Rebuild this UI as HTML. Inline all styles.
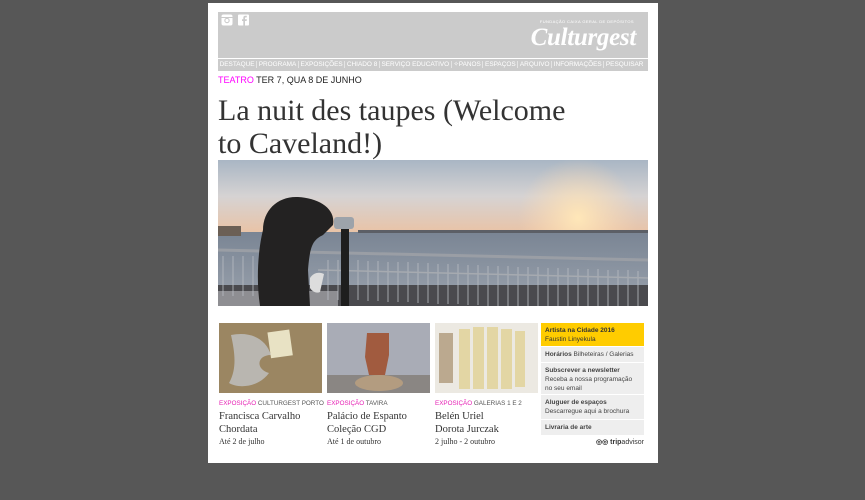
<!DOCTYPE html>
<html><head><meta charset="utf-8"><style>
*{margin:0;padding:0;box-sizing:border-box}
body{width:865px;height:500px;background:#575757;font-family:"Liberation Sans",sans-serif;position:relative;overflow:hidden}
#page{position:absolute;left:208px;top:3px;width:450px;height:460px;background:#fff}
#hdr{position:absolute;left:10px;top:9px;width:430px;height:46px;background:#cbcbcb}
#nav{position:absolute;left:10px;top:56px;width:430px;height:12px;background:#cbcbcb;font-size:6.45px;color:#fff;white-space:nowrap;line-height:12px;overflow:hidden}
#nav span{padding:0 1.6px;border-right:1px solid #e4e4e4}
.abs{position:absolute}
.ser{font-family:"Liberation Serif",serif;color:#333}
.th{position:absolute;top:320px;width:103px;height:70px}
.cap{position:absolute;top:397px;width:105px}
.cap .k{font-size:6.3px;color:#555;white-space:nowrap}
.cap .k b{color:#e61fb4;font-weight:normal}
.cap .t{font-family:"Liberation Serif",serif;font-size:10.5px;color:#333;line-height:13px;margin-top:3px}
.cap .d{font-family:"Liberation Serif",serif;font-size:8px;color:#333;margin-top:1px}
#side{position:absolute;left:333px;top:320px;width:103px;font-size:6.5px;color:#444}
#side div{background:#eee;border-bottom:1px solid #fff;padding:3px 4px;line-height:9px}
</style></head><body>
<div id="page">
<div id="hdr">
 <svg class="abs" style="left:3px;top:2px" width="30" height="12" viewBox="0 0 30 12">
  <rect x="0.5" y="0.5" width="11" height="11" rx="2" fill="#fff"/>
  <circle cx="6" cy="6.5" r="2.7" fill="#cbcbcb"/><circle cx="6" cy="6.5" r="1.6" fill="#fff"/>
  <rect x="0.5" y="3" width="11" height="1" fill="#cbcbcb"/>
  <rect x="17" y="0.5" width="11" height="11" rx="1" fill="#fff"/>
  <path d="M24 12V7h1.6l.3-1.8H24V4.2c0-.5.2-.8.8-.8h1V1.8h-1.5C22.9 1.8 22.3 2.7 22.3 4v1.2H21V7h1.3v5z" fill="#cbcbcb"/>
 </svg>
 <div class="abs" style="right:14px;top:7px;font-size:4px;color:#fff;letter-spacing:.4px;white-space:nowrap">FUNDAÇÃO CAIXA GERAL DE DEPÓSITOS</div>
 <div class="abs" style="right:12px;top:12px;font-family:'Liberation Serif',serif;font-style:italic;font-weight:bold;font-size:25px;color:#fff;letter-spacing:-.3px">Culturgest</div>
</div>
<div id="nav"><span>DESTAQUE</span><span>PROGRAMA</span><span>EXPOSIÇÕES</span><span>CHIADO 8</span><span>SERVIÇO EDUCATIVO</span><span>✧PANOS</span><span>ESPAÇOS</span><span>ARQUIVO</span><span>INFORMAÇÕES</span><span style="border:0">PESQUISAR</span></div>
<div class="abs" style="left:10px;top:72px;font-size:9px;color:#222;white-space:nowrap"><span style="color:#f0f">TEATRO</span> TER 7, QUA 8 DE JUNHO</div>
<div class="abs ser" style="left:10px;top:91px;width:362px;font-size:30px;line-height:33px">La nuit des taupes (Welcome to Caveland!)</div>
<svg class="abs" style="left:10px;top:157px" width="430" height="146" viewBox="0 0 430 146">
 <defs>
  <linearGradient id="sky" x1="0" y1="0" x2="0" y2="1"><stop offset="0" stop-color="#a9b6c4"/><stop offset=".5" stop-color="#d6d3d3"/><stop offset="1" stop-color="#e9c3a6"/></linearGradient>
  <linearGradient id="sea" x1="0" y1="0" x2="0" y2="1"><stop offset="0" stop-color="#7a8594"/><stop offset="1" stop-color="#9aa2ad"/></linearGradient>
  <radialGradient id="sun" cx="360" cy="58" r="60" gradientUnits="userSpaceOnUse"><stop offset="0" stop-color="#ffe7b8"/><stop offset="1" stop-color="#ffd9b0" stop-opacity="0"/></radialGradient>
 </defs>
 <rect width="430" height="73" fill="url(#sky)"/>
 <rect width="430" height="73" fill="url(#sun)"/>
 <rect y="72" width="430" height="74" fill="url(#sea)"/>
 <rect x="0" y="66" width="23" height="10" fill="#6b5f55"/>
 <rect x="140" y="70" width="290" height="3" fill="#5c5f66"/>
 <rect y="125" width="430" height="21" fill="#4a4a4e"/>
 <rect y="131" width="120" height="15" fill="#8e8e92"/>
 <path d="M0 90L430 100" stroke="#9a9ea5" stroke-width="3"/>
 <g stroke="#b8bcc2" stroke-width=".8">
  <path d="M5 96v40M15 96v40M25 96v40M35 96v40M45 96v40M110 100v40M120 100v40M130 100v40M140 100v40M150 101v40M160 101v40M170 102v40M180 102v40M190 102v40M200 103v40M210 103v40M220 104v40M230 104v40M240 104v40M250 105v40M260 105v40M270 106v40M280 106v40M290 106v40M300 107v40M310 107v40M320 107v40M330 108v40M340 108v40M350 108v40M360 109v40M370 109v40M380 109v40M390 110v40M400 110v40M410 110v40M420 111v40"/>
 </g>
 <path d="M100 110L430 118" stroke="#a6aab0" stroke-width="1.5"/>
 <rect x="123" y="65" width="8" height="81" fill="#1e1e1e"/>
 <rect x="116" y="57" width="20" height="12" rx="3" fill="#9da3aa"/>
 <path d="M42 146C38 120 40 90 45 70C45 50 60 36 80 37C100 38 118 48 115 65L105 75C95 80 92 85 90 110L92 146Z" fill="#232222"/>
 <path d="M92 118c4-6 10-6 14-4l-4 18c-4 2-8-1-10-4z" fill="#ddd"/>
</svg>
<svg class="th" style="left:11px" viewBox="0 0 103 70"><rect width="103" height="70" fill="#9b8662"/><path d="M12 12c20-4 35 4 40 20c-14 0-16 14-2 18c-10 14-30 16-40 10c8-14 6-30 2-48z" fill="#b9b6b0"/><rect x="50" y="8" width="22" height="26" fill="#e8e2c4" transform="rotate(-8 60 20)"/></svg>
<svg class="th" style="left:119px" viewBox="0 0 103 70"><rect width="103" height="70" fill="#a9acb6"/><rect y="52" width="103" height="18" fill="#8a8683"/><ellipse cx="52" cy="60" rx="24" ry="8" fill="#b39c80"/><path d="M40 10h22v22l-4 20h-16l-4-18z" fill="#a15b3f"/></svg>
<svg class="th" style="left:227px" viewBox="0 0 103 70"><rect width="103" height="70" fill="#ece9e2"/><g fill="#e3d6a4"><rect x="24" y="6" width="11" height="60"/><rect x="38" y="4" width="11" height="62"/><rect x="52" y="4" width="11" height="62"/><rect x="66" y="6" width="11" height="60"/><rect x="80" y="8" width="10" height="56"/></g><rect x="4" y="10" width="14" height="50" fill="#bba98f"/></svg>
<div class="cap" style="left:11px"><div class="k"><b>EXPOSIÇÃO</b> CULTURGEST PORTO</div><div class="t">Francisca Carvalho<br>Chordata</div><div class="d">Até 2 de julho</div></div>
<div class="cap" style="left:119px"><div class="k"><b>EXPOSIÇÃO</b> TAVIRA</div><div class="t">Palácio de Espanto<br>Coleção CGD</div><div class="d">Até 1 de outubro</div></div>
<div class="cap" style="left:227px"><div class="k"><b>EXPOSIÇÃO</b> GALERIAS 1 E 2</div><div class="t">Belén Uriel<br>Dorota Jurczak</div><div class="d">2 julho - 2 outubro</div></div>
<div id="side">
 <div style="background:#fc0;color:#333;height:24px"><b>Artista na Cidade 2016</b><br>Faustin Linyekula</div>
 <div><b>Horários</b> Bilheteiras / Galerias</div>
 <div style="height:32px"><b>Subscrever a newsletter</b><br>Receba a nossa programação no seu email</div>
 <div><b>Aluguer de espaços</b><br>Descarregue aqui a brochura</div>
 <div><b>Livraria de arte</b></div>
 <p style="text-align:right;font-size:7px;color:#333;margin-top:2px"><b>◎◎</b> <b>trip</b>advisor</p>
</div>
</div>
</body></html>
